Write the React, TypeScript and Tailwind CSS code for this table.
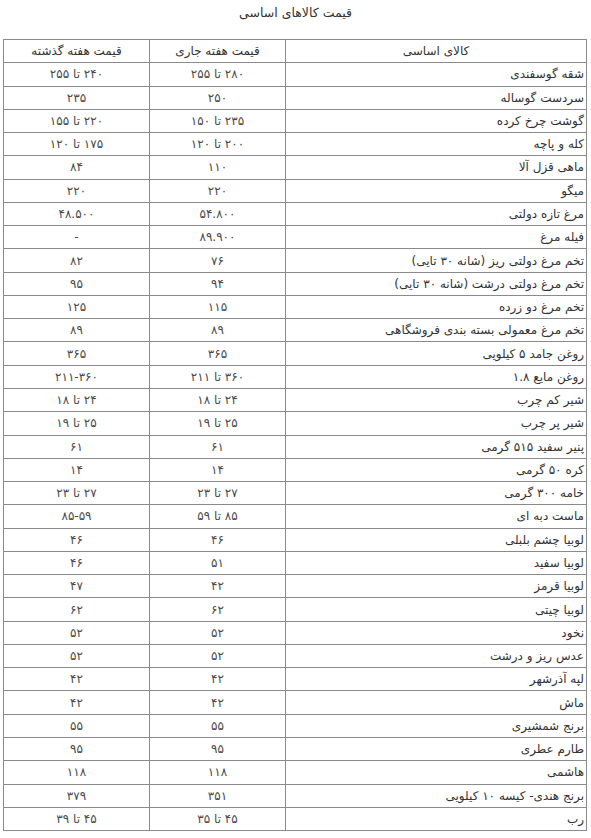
import React from 'react';

type Row = { name: string; current: string; past: string };

const rows: Row[] = [
  { name: 'شقه گوسفندی', current: '۲۸۰ تا ۲۵۵', past: '۲۴۰ تا ۲۵۵' },
  { name: 'سردست گوساله', current: '۲۵۰', past: '۲۳۵' },
  { name: 'گوشت چرخ کرده', current: '۲۳۵ تا ۱۵۰', past: '۲۲۰ تا ۱۵۵' },
  { name: 'کله و پاچه', current: '۲۰۰ تا ۱۲۰', past: '۱۷۵ تا ۱۲۰' },
  { name: 'ماهی قزل آلا', current: '۱۱۰', past: '۸۴' },
  { name: 'میگو', current: '۲۲۰', past: '۲۲۰' },
  { name: 'مرغ تازه دولتی', current: '۵۴.۸۰۰', past: '۴۸.۵۰۰' },
  { name: 'فیله مرغ', current: '۸۹.۹۰۰', past: '-' },
  { name: 'تخم مرغ دولتی ریز (شانه ۳۰ تایی)', current: '۷۶', past: '۸۲' },
  { name: 'تخم مرغ دولتی درشت (شانه ۳۰ تایی)', current: '۹۴', past: '۹۵' },
  { name: 'تخم مرغ دو زرده', current: '۱۱۵', past: '۱۲۵' },
  { name: 'تخم مرغ معمولی بسته بندی فروشگاهی', current: '۸۹', past: '۸۹' },
  { name: 'روغن جامد ۵ کیلویی', current: '۳۶۵', past: '۳۶۵' },
  { name: 'روغن مایع ۱.۸', current: '۳۶۰ تا ۲۱۱', past: '۲۱۱-۳۶۰' },
  { name: 'شیر کم چرب', current: '۲۴ تا ۱۸', past: '۲۴ تا ۱۸' },
  { name: 'شیر پر چرب', current: '۲۵ تا ۱۹', past: '۲۵ تا ۱۹' },
  { name: 'پنیر سفید ۵۱۵ گرمی', current: '۶۱', past: '۶۱' },
  { name: 'کره ۵۰ گرمی', current: '۱۴', past: '۱۴' },
  { name: 'خامه ۳۰۰ گرمی', current: '۲۷ تا ۲۳', past: '۲۷ تا ۲۳' },
  { name: 'ماست دبه ای', current: '۸۵ تا ۵۹', past: '۸۵-۵۹' },
  { name: 'لوبیا چشم بلبلی', current: '۴۶', past: '۴۶' },
  { name: 'لوبیا سفید', current: '۵۱', past: '۴۶' },
  { name: 'لوبیا قرمز', current: '۴۲', past: '۴۷' },
  { name: 'لوبیا چیتی', current: '۶۲', past: '۶۲' },
  { name: 'نخود', current: '۵۲', past: '۵۲' },
  { name: 'عدس ریز و درشت', current: '۵۲', past: '۵۲' },
  { name: 'لپه آذرشهر', current: '۴۲', past: '۴۲' },
  { name: 'ماش', current: '۴۲', past: '۴۲' },
  { name: 'برنج شمشیری', current: '۵۵', past: '۵۵' },
  { name: 'طارم عطری', current: '۹۵', past: '۹۵' },
  { name: 'هاشمی', current: '۱۱۸', past: '۱۱۸' },
  { name: 'برنج هندی- کیسه ۱۰ کیلویی', current: '۳۵۱', past: '۳۷۹' },
  { name: 'رب', current: '۴۵ تا ۳۵', past: '۴۵ تا ۳۹' },
];

const cell = 'border border-[#8a8a8a] h-[23.27px] p-0 leading-none align-middle';

export default function App() {
  return (
    <div
      dir="rtl"
      className="w-[591px] h-[838px] bg-white text-[#333] text-[12px]"
      style={{ fontFamily: '"DejaVu Sans", Tahoma, sans-serif' }}
    >
      <div className="h-[39px] pt-[5px] text-center text-[12.5px] leading-[16px]">قیمت کالاهای اساسی</div>

      <table className="mx-[4px] w-[583px] border-collapse table-fixed">
        <colgroup>
          <col className="w-[301px]" />
          <col className="w-[136px]" />
          <col className="w-[146px]" />
        </colgroup>
        <thead>
          <tr>
            <th className={`${cell} font-normal text-center`}>کالای اساسی</th>
            <th className={`${cell} font-normal text-center`}>قیمت هفته جاری</th>
            <th className={`${cell} font-normal text-center`}>قیمت هفته گذشته</th>
          </tr>
        </thead>
        <tbody>
          {rows.map((r) => (
            <tr key={r.name}>
              <td className={`${cell} text-right pr-[2px] whitespace-nowrap`}>{r.name}</td>
              <td className={`${cell} text-center text-[#4a4a4a]`}>{r.current}</td>
              <td className={`${cell} text-center text-[#4a4a4a]`}>{r.past}</td>
            </tr>
          ))}
        </tbody>
      </table>
    </div>
  );
}
